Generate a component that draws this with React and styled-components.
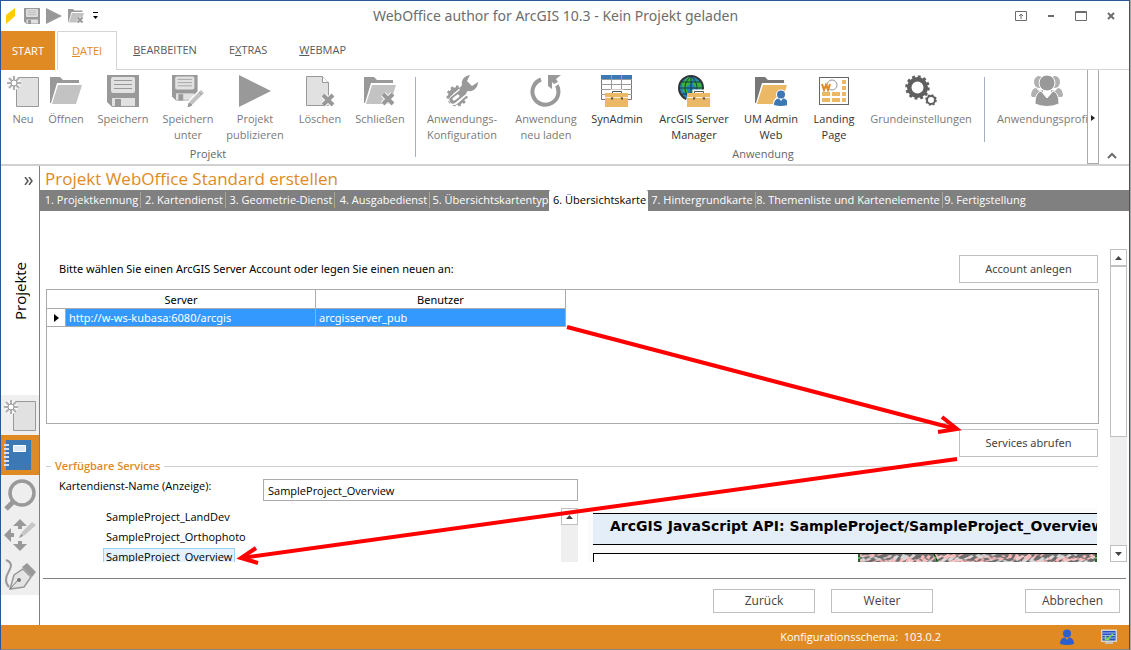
import React from 'react';
import styled, { createGlobalStyle } from 'styled-components';

const ORANGE = '#e08a23';
const GREY = '#999999';
const LIGHT = '#e1e1e1';
const BOX = '#ebb866';
const BLUE = '#3c78b4';

/* ---------- icons ---------- */

const Svg = ({ size = 32, children }) => (
  <svg width={size} height={size} viewBox="0 0 32 32" aria-hidden="true">{children}</svg>
);

const Gear = ({ cx, cy, r, hole, teeth, color }) => {
  const step = (Math.PI * 2 * r) / teeth / 2;
  return (
    <g fill="none" stroke={color}>
      <circle cx={cx} cy={cy} r={(r + hole) / 2} strokeWidth={r - hole} />
      <circle cx={cx} cy={cy} r={r} strokeWidth={r / 3} strokeDasharray={`${step} ${step}`} />
    </g>
  );
};

const Floppy = () => (
  <>
    <path d="M0 0H32V32H5L0 27Z" fill={GREY} />
    <rect x="4" y="2" width="24" height="16" rx="2" fill={LIGHT} />
    <path d="M7 5.5H25M7 9.5H25M7 13.5H25" stroke={GREY} />
    <path d="M5 23H28V31H5Z" fill={LIGHT} />
    <rect x="8" y="24" width="6" height="8" fill={GREY} />
  </>
);

const FolderShape = ({ back = GREY, front = '#c3c3c3' }) => (
  <>
    <path d="M0 2H10L13 5H29V8H7L1 28H0Z" fill={back} />
    <path d="M8 10H32L26 29H2Z" fill={front} />
  </>
);

const Cross = ({ x, y }) => (
  <g transform={`translate(${x} ${y})`}>
    <path d="M0 0L10 10M10 0L0 10" stroke="#fff" strokeWidth="6" />
    <path d="M0 0L10 10M10 0L0 10" stroke={GREY} strokeWidth="4" />
  </g>
);

const Pencil = () => (
  <>
    <path d="M16 32L18 26L29 15L32 18L21 29Z" fill="#fff" stroke="#fff" strokeWidth="3" />
    <path d="M16 32L18 26L29 15L32 18L21 29Z" fill="#c3c3c3" />
    <path d="M16 32L17 28L20 30ZM27 17L30 20" fill={GREY} stroke={GREY} />
  </>
);

const Toolbox = () => (
  <>
    <path d="M11 18V16H21V18" fill="none" stroke="#fff" strokeWidth="3" />
    <path d="M11.5 18V16.5H20.5V18" fill="none" stroke="#555" />
    <path d="M4 18H27V32H4Z" fill={BOX} />
    <path d="M4 22.5H10M13 22.5H19M22 22.5H27" stroke="#fff3dc" />
    <path d="M10 23.5H12M20 23.5H22" stroke="#555" strokeWidth="2" />
  </>
);

const NewIcon = () => (
  <Svg>
    <path d="M9 2.5H31.5V31.5H9.5V13" fill={LIGHT} stroke="#999" />
    <circle cx="7" cy="8" r="7" fill="#f6f6f6" />
    <path d="M7 1V15M0 8H14M2 3L12 13M12 3L2 13" stroke="#b0b0b0" strokeWidth="2" />
    <circle cx="7" cy="8" r="3" fill="#fff" stroke={GREY} />
  </Svg>
);

const OpenIcon = () => <Svg><FolderShape /></Svg>;
const SaveIcon = ({ size }) => <Svg size={size}><Floppy /></Svg>;
const SaveAsIcon = () => (
  <Svg>
    <g transform="scale(0.8)"><Floppy /></g>
    <Pencil />
  </Svg>
);
const PlayIcon = ({ size }) => <Svg size={size}><path d="M0 0L32 16L0 32Z" fill={GREY} /></Svg>;
const DeleteIcon = () => (
  <Svg>
    <path d="M2.5 1.5H18.5L24.5 7.5V30.5H2.5Z" fill={LIGHT} stroke={GREY} />
    <path d="M18.5 1.5V7.5H24.5" fill="#fff" stroke={GREY} />
    <Cross x={19} y={20} />
  </Svg>
);
const CloseProjectIcon = ({ size }) => (
  <Svg size={size}>
    <FolderShape />
    <Cross x={19} y={19} />
  </Svg>
);
const ConfigIcon = () => (
  <Svg>
    <Gear cx={11} cy={21} r={9} hole={4} teeth={11} color={GREY} />
    <path d="M8 25L17 17" stroke="#fff" strokeWidth="10" strokeLinecap="round" />
    <path d="M7 25L17 17" stroke={GREY} strokeWidth="7" strokeLinecap="round" />
    <path d="M8 24L12 21" stroke="#fff" strokeWidth="3" strokeLinecap="round" />
    <path d="M24 0C18 1 15 5 16 10L13 14L18 19L22 16C27 17 32 13 32 7L26 11L21 6Z" fill={GREY} />
  </Svg>
);
const ReloadIcon = () => (
  <Svg>
    <path d="M11 4.5A13 13 0 1 0 25.500 8.500" fill="none" stroke={GREY} strokeWidth="4" />
    <path d="M18 0H31L27 4L30 8L22 14L18 12Z" fill="#fff" />
    <path d="M18 0H31L26 4L28 7L24 9L22 7V14L18 11Z" fill={GREY} />
  </Svg>
);
const SynIcon = () => (
  <Svg>
    <path d="M0.5 0.5H30.5V24.5H0.5Z" fill="#fff" stroke="#777" />
    <path d="M0 4.5H31M0 9.500H31M0 14.500H31M0 19.500H31M10.5 0V24M20.5 0V24" stroke="#9a9a9a" />
    <path d="M0 0H10V4H0ZM11 0H20V4H11ZM21 0H31V4H21Z" fill={BLUE} />
    <Toolbox />
  </Svg>
);
const GlobeIcon = () => (
  <Svg>
    <circle cx="13" cy="13" r="12" fill="#2484bc" stroke="#333" strokeWidth="2" />
    <path d="M4 8L10 2L15 4L12 9L8 12L10 18L5 17ZM17 5L23 8L24 15L18 13L15 9ZM13 15L19 16L17 22L13 20Z" fill="#3cb43c" />
    <path d="M1 13H25M3 7H23M4 19H23M13 1C5 8 5 18 13 25M13 1C21 8 21 18 13 25M13 1V25" fill="none" stroke="#173c4c" />
    <path d="M8 32C6 19 14 16 28 16V32Z" fill="#fff" />
    <g transform="translate(5 0)"><Toolbox /></g>
  </Svg>
);
const UserShape = ({ color = BLUE }) => (
  <>
    <circle cx="16" cy="9" r="8" fill={color} />
    <path d="M2 30C2 19 9 17 12 17L16 22L20 17C24 17 30 20 30 30Q16 34 2 30Z" fill={color} />
  </>
);
const UmAdminIcon = () => (
  <Svg>
    <FolderShape back="#777777" front={BOX} />
    <g transform="translate(18 15) scale(0.5)">
      <circle cx="16" cy="9" r="10" fill="#fff" />
      <circle cx="16" cy="28" r="16" fill="#fff" />
      <UserShape />
    </g>
  </Svg>
);
const LandingIcon = () => (
  <Svg>
    <rect x="1.5" y="2.5" width="29" height="27" fill="#fff" stroke="#666" />
    <circle cx="14" cy="10" r="5" fill="none" stroke="#999" />
    <path d="M4 9L6 15L8 10L10 15L12 9" fill="none" stroke={ORANGE} strokeWidth="2" />
    <path d="M24 5H28V9H24ZM24 11H28V15H24ZM4 17H12V21H4ZM14 17H22V21H14ZM24 17H28V21H24ZM4 23H12V27H4ZM14 23H22V27H14ZM24 23H28V27H24Z" fill={BOX} />
  </Svg>
);
const SettingsIcon = () => (
  <Svg>
    <Gear cx={12.5} cy={12.5} r={10.5} hole={6} teeth={12} color="#606060" />
    <Gear cx={26} cy={25} r={5} hole={3} teeth={8} color="#606060" />
  </Svg>
);
const ProfilesIcon = () => (
  <Svg>
    <g fill="#b0b0b0">
      <ellipse cx="8" cy="7" rx="5" ry="6" />
      <ellipse cx="24" cy="7" rx="5" ry="6" />
      <path d="M0 20Q1 13 5 13L8 16L12 15V22H1ZM32 20Q31 13 27 13L24 16L20 15V22H31Z" />
    </g>
    <g fill={GREY} stroke="#fff">
      <ellipse cx="16" cy="8" rx="8" ry="8" />
      <path d="M4 29C4 20 7 17 10 16L16 23L22 16C25 17 28 20 28 29Q16 34 4 29Z" />
    </g>
  </Svg>
);

const LogoIcon = () => <Svg size={16}><path d="M8 14L26 0V16L8 32Z" fill="#ffcc00" /></Svg>;
const QuickCaret = () => (
  <svg width="12" height="16" viewBox="0 0 12 16" aria-hidden="true">
    <path d="M3 4.5H8" stroke="#000" /><path d="M3 8H8L5.5 11Z" />
  </svg>
);
const WinIcon = ({ d }) => (
  <svg width="12" height="12" viewBox="0 0 12 12" fill="none" stroke="#6c6c6c" aria-hidden="true">{d}</svg>
);

const BookIcon = () => (
  <Svg>
    <path d="M2 1H27V31H2Z" fill={BLUE} />
    <path d="M0 6H5M0 10H5M0 14H5M0 18H5M0 22H5M0 26H5" stroke="#d5e2ee" strokeWidth="2" />
    <path d="M9.500 6.500H21.500V12.500H9.500Z" fill="#dce9f5" stroke="#fff" />
  </Svg>
);
const SearchIcon = () => (
  <Svg>
    <circle cx="18" cy="14" r="12" fill="#eee" stroke={GREY} strokeWidth="3.500" />
    <path d="M9 23L2 30" stroke={GREY} strokeWidth="5" />
  </Svg>
);
const MoveIcon = () => (
  <Svg>
    <path d="M16 0L23 7H18V10H14V7H9ZM16 32L9 25H14V22H18V25H23ZM0 16L7 9V14H10V18H7V23Z" fill={GREY} />
    <path d="M15 19L18 13L28 3L32 6L21 16Z" fill="#c6c6c6" />
    <path d="M15 19L17 15L19 17Z" fill={GREY} />
  </Svg>
);
const PenIcon = () => (
  <Svg>
    <path d="M2 1Q10 4 5 12Q-1 22 5 28" fill="none" stroke={GREY} strokeWidth="2" />
    <path d="M6 30L10 16L19 10L27 18L20 28Z" fill="#e4e4e4" stroke={GREY} strokeWidth="1.500" />
    <path d="M6 30L14 21" stroke="#777" />
    <circle cx="15" cy="21" r="2" fill="#777" />
    <path d="M18 8L23 4L32 13L28 18Z" fill={GREY} />
  </Svg>
);
const MonitorIcon = () => (
  <Svg size={16}>
    <path d="M0 1H32V26H0Z" fill="#d8d4c8" />
    <path d="M3 4H29V23H3Z" fill="#2a4fc4" />
    <path d="M4 8H28M4 13H28M4 18H28" stroke="#a0b8f0" strokeWidth="2" />
    <path d="M24 10L13 20M9 14V21H17" fill="none" stroke="#7ee04a" strokeWidth="3" />
    <path d="M8 26H24V30H8Z" fill="#c4c0b4" />
  </Svg>
);
const Caret = ({ up }) => (
  <svg width="7" height="4" viewBox="0 0 7 4" aria-hidden="true">
    <path d={up ? 'M0 4L3.500 0L7 4Z' : 'M0 0H7L3.500 4Z'} fill="#444" />
  </svg>
);

/* ---------- frame ---------- */

const GlobalStyle = createGlobalStyle`
  * { box-sizing: border-box; }
  body { margin: 0; background: #a8a8a8; }
  button, input { font: inherit; color: inherit; margin: 0; }
  button { background: none; border: 0; padding: 0; white-space: nowrap; }
`;

const Window = styled.div`
  display: flex;
  flex-direction: column;
  height: 100vh;
  margin-right: 1px;
  border: 1px solid #2a579a;
  border-bottom-color: #8a8379;
  background: #fff;
  color: #000;
  font: 11px/16px "Noto Sans", "Open Sans", sans-serif;
  overflow: hidden;
`;

const TitleBar = styled.header`
  display: flex;
  align-items: center;
  flex: none;
  height: 30px;
  padding-right: 3px;
  color: #6d6d6d;
`;

const QuickBar = styled.div`
  display: flex;
  align-items: center;
  gap: 6px;
  width: 104px;
  padding-left: 1px;

  button { display: flex; }
`;

const Title = styled.h1`
  flex: 1;
  margin: 0;
  text-align: center;
  font: 14px/20px "Noto Sans", sans-serif;
`;

const WindowButton = styled.button`
  display: flex;
  align-items: center;
  justify-content: center;
  width: 30px;
  height: 28px;
`;

const Tabs = styled.nav`
  display: flex;
  flex: none;
  height: 39px;
  font-family: "Open Sans", sans-serif;
  font-size: 11px;

  &::after {
    content: "";
    flex: 1;
    border-bottom: 1px solid #d4d4d4;
  }
`;

const StartTab = styled.button`
  width: 54px;
  margin-right: 2px;
  background: ${ORANGE};
  color: #fff;
`;

const Tab = styled.button`
  padding: 0 ${(p) => (p.$active ? 14 : 16)}px;
  color: ${(p) => (p.$active ? ORANGE : '#5a5a5a')};
  border: solid #d4d4d4;
  border-width: ${(p) => (p.$active ? '1px 1px 0' : '0 0 1px')};
`;

const Ribbon = styled.section`
  display: flex;
  flex: none;
  height: 96px;
  border-bottom: 2px solid #d0d0d0;
  font-family: "Open Sans", sans-serif;
`;

const Strip = styled.div`
  display: flex;
  flex: 1;
  min-width: 0;
  overflow: hidden;
`;

const Group = styled.div`
  display: flex;
  flex-direction: column;
  flex: none;
  width: ${(p) => p.$width}px;
`;

const GroupItems = styled.div`
  display: flex;
  height: 76px;
`;

const GroupLabel = styled.div`
  text-align: center;
  color: #666;
`;

const Item = styled.button`
  display: flex;
  flex-direction: column;
  align-items: center;
  flex: none;
  gap: 4px;
  width: ${(p) => p.$width}px;
  padding-top: 5px;
  color: ${(p) => (p.$dark ? '#333' : '#7a7a7a')};
  line-height: 16px;
  white-space: pre;
`;

const Divider = styled.div`
  flex: none;
  width: 1px;
  height: ${(p) => p.$height}px;
  margin: 7px 0 0 ${(p) => p.$gap || 0}px;
  background: #a3b0c2;
`;

const RibbonScroll = styled.button`
  width: 12px;
  border: 1px solid #ababab;
  border-top: 0;
`;

const RibbonEnd = styled.div`
  display: flex;
  align-items: flex-end;
  width: 30px;
  padding: 0 8px;
`;

const Workspace = styled.div`
  display: flex;
  flex: 1;
  min-height: 0;
`;

/* ---------- sidebar ---------- */

const Sidebar = styled.aside`
  display: flex;
  flex-direction: column;
  width: 39px;
  padding-bottom: 30px;
  border-right: 1px solid #808080;
`;

const Expand = styled.button`
  height: 30px;
  padding-left: 18px;
`;

const SideTitle = styled.div`
  display: flex;
  flex: 1;
  align-items: center;
  justify-content: center;
  align-self: center;
  padding-top: 9px;
  writing-mode: vertical-rl;
  transform: rotate(180deg);
  font: 15px/20px "Open Sans", sans-serif;
`;

const SideButton = styled.button`
  display: flex;
  align-items: center;
  justify-content: center;
  height: 40px;
  background: ${(p) => (p.$active ? ORANGE : '#efefef')};
`;

/* ---------- wizard ---------- */

const Main = styled.main`
  display: flex;
  flex-direction: column;
  flex: 1;
  min-width: 0;
`;

const Heading = styled.h2`
  margin: 0;
  padding: 2px 5px 0;
  color: ${ORANGE};
  font: 17px/22px "Open Sans", sans-serif;
`;

const Steps = styled.ol`
  display: grid;
  grid-template-columns: 101px 84px 110px 95px 119px 99px 106px 186px 88px;
  flex: none;
  height: 21px;
  margin: 0;
  padding: 0;
  list-style: none;
  background: #808080;
  font-family: "Open Sans", sans-serif;
`;

const Step = styled.li`
  display: flex;
  align-items: center;
  justify-content: center;
  padding: 0 0 1px 2px;
  white-space: nowrap;
  color: ${(p) => (p.$active ? '#000' : '#fff')};
  background: ${(p) => (p.$active ? '#fff' : 'none')};
  border-radius: 2px 2px 0 0;

  &::after {
    content: "";
    width: 1px;
    height: 16px;
    margin: 0 -3px 0 2px;
    background: ${(p) => (p.$line ? '#aaa694' : 'none')};
  }
`;

const ScrollArea = styled.div`
  display: flex;
  flex: 1;
  gap: 11px;
  min-height: 0;
  padding: 0 2px 0 6px;
`;

const Form = styled.div`
  flex: 1;
  min-width: 0;
  padding-top: 44px;
  overflow: hidden;
`;

const ScrollTrack = styled.div`
  display: flex;
  flex-direction: column;
  flex: none;
  width: 17px;
  margin-top: ${(p) => p.$top || 0}px;
  background: #efefef;
`;

const ScrollButton = styled.button`
  display: flex;
  align-items: center;
  justify-content: center;
  flex: none;
  height: 17px;
  border: 1px solid #c0c0c0;
  background: #fff;
`;

const Thumb = styled.div`
  flex: 0 0 171px;
  margin-bottom: auto;
  border: 1px solid #c0c0c0;
  background: #fff;
`;

const Line = styled.div`
  display: flex;
  align-items: center;
  justify-content: space-between;
  padding: 0 1px 0 13px;
`;

const ActionButton = styled.button`
  width: 139px;
  height: 28px;
  margin-left: auto;
  border: 1px solid #c0c0c0;
  background: #fff;
  color: #444;
  font-family: "Noto Sans", sans-serif;
`;

const TableBox = styled.div`
  min-height: 135px;
  margin: 6px 0 5px;
  border: 1px solid #ababab;
`;

const Table = styled.table`
  width: 519px;
  border-collapse: separate;
  border-spacing: 0;
  table-layout: fixed;

  th, td {
    height: 18px;
    padding: 0 3px;
    border-right: 1px solid #ababab;
    border-bottom: 1px solid #ababab;
    font-weight: normal;
    text-align: left;
    line-height: 17px;
  }

  th {
    padding-top: 1px;
    text-align: center;
  }

  td:first-child { padding: 0 0 0 7px; }
  td:not(:first-child) { background: #3399ff; color: #fff; }
  td svg { display: block; }
`;

const Legend = styled.div`
  display: flex;
  align-items: center;
  gap: 4px;
  margin: 1px 1px 4px 0;
  color: ${ORANGE};
  font: 600 11px/16px "Open Sans", sans-serif;

  &::before, &::after {
    content: "";
    width: 5px;
    height: 1px;
    background: #d0d0d0;
  }

  &::after { flex: 1; }
`;

const NameRow = styled.div`
  display: grid;
  grid-template-columns: 204px 315px;
  align-items: start;
  margin-bottom: 7px;
  padding-left: 13px;
  font-family: "Open Sans", sans-serif;
`;

const TextInput = styled.input`
  height: 22px;
  margin-top: 1px;
  padding: 0 4px;
  border: 1px solid #ababab;
`;

const Split = styled.div`
  display: grid;
  grid-template-columns: 532px 1fr;
  gap: 10px;
  height: 60px;
`;

const ListPane = styled.div`
  display: flex;
`;

const ServiceList = styled.ul`
  flex: 1;
  margin: 0;
  padding: 0 0 0 57px;
  list-style: none;
  font-family: "Open Sans", sans-serif;
`;

const Service = styled.li`
  height: 20px;

  button {
    display: block;
    height: 18px;
    padding: 0 2px;
    line-height: 16px;
    border: 1px solid ${(p) => (p.$active ? '#9bd4f0' : 'transparent')};
    background: ${(p) => (p.$active ? '#e3f1fa' : 'none')};
  }
`;

const Preview = styled.div`
  min-width: 0;
  margin-right: 2px;
  padding: 5px 0 0 5px;
  background: #fbfbfb;
  overflow: hidden;
`;

const PreviewTitle = styled.div`
  height: 32px;
  padding: 0 17px;
  border: solid #000;
  border-width: 1px 0;
  background: #e4eef8;
  font: bold 14px/25px "DejaVu Sans", sans-serif;
  white-space: nowrap;
`;

const PreviewMap = styled.div`
  display: flex;
  justify-content: flex-end;
  height: 30px;
  margin-top: 8px;
  border: 1px solid #000;
  border-right: 0;
  background: #fff;
`;

const Footer = styled.footer`
  display: flex;
  justify-content: flex-end;
  flex: none;
  margin: 16px 3px 0;
  padding: 10px 6px 12px;
  border-top: 1px solid #808080;
`;

const FooterButton = styled.button`
  width: ${(p) => p.$width}px;
  height: 24px;
  margin-left: ${(p) => p.$gap}px;
  border: 1px solid #c0c0c0;
  color: #444;
  font-family: "Open Sans", sans-serif;
  font-size: 12px;
`;

const StatusBar = styled.div`
  display: flex;
  align-items: center;
  justify-content: flex-end;
  flex: none;
  height: 24px;
  padding-right: 12px;
  background: ${ORANGE};
  color: #fff;
  font-family: "Open Sans", sans-serif;
  white-space: pre;
`;

const StatusIcons = styled.div`
  display: flex;
  gap: 26px;
  margin-left: 118px;
`;

const Arrows = styled.svg`
  position: absolute;
  top: 0;
  left: 0;
  pointer-events: none;
`;

/* ---------- data ---------- */

const projectItems = [
  ['Neu', NewIcon, 44],
  ['Öffnen', OpenIcon, 42],
  ['Speichern', SaveIcon, 72],
  ['Speichern\nunter', SaveAsIcon, 58],
  ['Projekt\npublizieren', PlayIcon, 76],
  ['Löschen', DeleteIcon, 54],
  ['Schließen', CloseProjectIcon, 66],
];

const appItems = [
  ['Anwendungs-\nKonfiguration', ConfigIcon, 92],
  ['Anwendung\nneu laden', ReloadIcon, 76],
  ['SynAdmin', SynIcon, 66, true],
  ['ArcGIS Server\nManager', GlobeIcon, 88, true],
  ['UM Admin\nWeb', UmAdminIcon, 66, true],
  ['Landing\nPage', LandingIcon, 60, true],
  ['Grundeinstellungen', SettingsIcon, 114],
];

const steps = [
  { label: '1. Projektkennung', line: true },
  { label: '2. Kartendienst', line: true },
  { label: '3. Geometrie-Dienst', line: true },
  { label: '4. Ausgabedienst', line: true },
  { label: '5. Übersichtskartentyp' },
  { label: '6. Übersichtskarte', active: true },
  { label: '7. Hintergrundkarte', line: true },
  { label: '8. Themenliste und Kartenelemente', line: true },
  { label: '9. Fertigstellung' },
];

const services = ['SampleProject_LandDev', 'SampleProject_Orthophoto', 'SampleProject_Overview'];

const sideItems = [
  ['Neues Projekt', NewIcon],
  ['Projekt', BookIcon],
  ['Suche', SearchIcon],
  ['Bearbeiten', MoveIcon],
  ['Zeichnen', PenIcon],
];

const mapColors = ['#ffb9b9', '#e2dcdc', '#ff8484', '#fbc6c6', '#d9d9d9', '#6d6d6d', '#ffb9b9'];
const parcels = Array.from({ length: 260 }, (_, i) => ({
  x: (i * 89) % 237,
  y: (i * i * 3 + i) % 9,
  w: 2 + ((i * i) % 7),
  h: 1 + ((i * 5) % 4),
  color: mapColors[(i * i + i * 3) % mapColors.length],
}));

const MapDrawing = () => (
  <svg width="239" height="28" viewBox="0 0 239 28" aria-hidden="true">
    <rect width="239" height="28" fill="#6d6d6d" />
    {parcels.map((p, i) => (
      <path key={i} d={`M${p.x} ${p.y + p.h}l${p.w} -${p.h}l3 1l-${p.w} ${p.h}z`} fill={p.color} />
    ))}
    <path d="M1 0V28M76 0L80 9M238 0V28" stroke="#4fae57" strokeWidth="2" />
    <path d="M1 0V28M76 0L80 9M238 0V28" stroke="#111" strokeDasharray="3 2" />
  </svg>
);

const RibbonItem = ({ item: [label, Icon, width, dark] }) => (
  <Item $width={width} $dark={dark}>
    <Icon />
    <span>{label}</span>
  </Item>
);

export default function App() {
  return (
    <>
      <GlobalStyle />
      <Window>
        <TitleBar>
          <QuickBar>
            <LogoIcon />
            <button aria-label="Speichern"><SaveIcon size={16} /></button>
            <button aria-label="Publizieren"><PlayIcon size={16} /></button>
            <button aria-label="Schließen"><CloseProjectIcon size={16} /></button>
            <button aria-label="Anpassen"><QuickCaret /></button>
          </QuickBar>
          <Title>WebOffice author for ArcGIS 10.3 - Kein Projekt geladen</Title>
          <WindowButton aria-label="Menüband">
            <WinIcon d={<path d="M0.500 1.500H11.500V10.500H0.500ZM6 9V4M4 6L6 4L8 6" />} />
          </WindowButton>
          <WindowButton aria-label="Minimieren">
            <WinIcon d={<path d="M3 6H9" strokeWidth="2" />} />
          </WindowButton>
          <WindowButton aria-label="Maximieren">
            <WinIcon d={<path d="M0.500 1.500H11.500V10.500H0.500ZM0 2.500H12" />} />
          </WindowButton>
          <WindowButton aria-label="Fenster schließen">
            <WinIcon d={<path d="M3 3L9 9M9 3L3 9" strokeWidth="2" />} />
          </WindowButton>
        </TitleBar>

        <Tabs>
          <StartTab>START</StartTab>
          <Tab $active><u>D</u>ATEI</Tab>
          <Tab><u>B</u>EARBEITEN</Tab>
          <Tab>E<u>X</u>TRAS</Tab>
          <Tab><u>W</u>EBMAP</Tab>
        </Tabs>

        <Ribbon>
          <Strip>
            <Group $width={414}>
              <GroupItems>
                {projectItems.map((item) => <RibbonItem key={item[0]} item={item} />)}
              </GroupItems>
              <GroupLabel>Projekt</GroupLabel>
            </Group>
            <Divider $height={80} />
            <Group $width={694}>
              <GroupItems>
                {appItems.map((item) => <RibbonItem key={item[0]} item={item} />)}
                <Divider $height={65} $gap={6} />
                <RibbonItem item={['Anwendungsprofile', ProfilesIcon, 124]} />
              </GroupItems>
              <GroupLabel>Anwendung</GroupLabel>
            </Group>
          </Strip>
          <RibbonScroll aria-label="Weiter blättern">
            <svg width="4" height="6" viewBox="0 0 4 6"><path d="M0 0L4 3L0 6Z" fill="#222" /></svg>
          </RibbonScroll>
          <RibbonEnd>
            <button aria-label="Menüband reduzieren">
              <svg width="10" height="8" viewBox="0 0 10 8"><path d="M1 6L5 2L9 6" fill="none" stroke="#6c6c6c" strokeWidth="2" /></svg>
            </button>
          </RibbonEnd>
        </Ribbon>

        <Workspace>
          <Sidebar>
            <Expand aria-label="Ausklappen">
              <svg width="10" height="8" viewBox="0 0 10 8"><path d="M1 0L4 4L1 8M5 0L8 4L5 8" fill="none" stroke="#555" strokeWidth="1.500" /></svg>
            </Expand>
            <SideTitle>Projekte</SideTitle>
            {sideItems.map(([label, Icon], i) => (
              <SideButton key={label} aria-label={label} $active={i === 1}><Icon /></SideButton>
            ))}
          </Sidebar>

          <Main>
            <Heading>Projekt WebOffice Standard erstellen</Heading>
            <Steps>
              {steps.map((step) => (
                <Step key={step.label} $active={step.active} $line={step.line}>{step.label}</Step>
              ))}
            </Steps>

            <ScrollArea>
              <Form>
                <Line>
                  <span>Bitte wählen Sie einen ArcGIS Server Account oder legen Sie einen neuen an:</span>
                  <ActionButton>Account anlegen</ActionButton>
                </Line>
                <TableBox>
                  <Table>
                    <colgroup><col width="19" /><col width="250" /><col width="250" /></colgroup>
                    <thead>
                      <tr><th colSpan="2">Server</th><th>Benutzer</th></tr>
                    </thead>
                    <tbody>
                      <tr>
                        <td><svg width="5" height="8" viewBox="0 0 5 8"><path d="M0 0L5 4L0 8Z" /></svg></td>
                        <td>http://w-ws-kubasa:6080/arcgis</td>
                        <td>arcgisserver_pub</td>
                      </tr>
                    </tbody>
                  </Table>
                </TableBox>
                <Line>
                  <ActionButton>Services abrufen</ActionButton>
                </Line>
                <Legend>Verfügbare Services</Legend>
                <NameRow>
                  <label htmlFor="service-name">Kartendienst-Name (Anzeige):</label>
                  <TextInput id="service-name" defaultValue="SampleProject_Overview" />
                </NameRow>
                <Split>
                  <ListPane>
                    <ServiceList>
                      {services.map((name, i) => (
                        <Service key={name} $active={i === 2}><button>{name}</button></Service>
                      ))}
                    </ServiceList>
                    <ScrollTrack>
                      <ScrollButton aria-label="Nach oben"><Caret up /></ScrollButton>
                    </ScrollTrack>
                  </ListPane>
                  <Preview>
                    <PreviewTitle>ArcGIS JavaScript API: SampleProject/SampleProject_Overview</PreviewTitle>
                    <PreviewMap><MapDrawing /></PreviewMap>
                  </Preview>
                </Split>
              </Form>
              <ScrollTrack $top={38}>
                <ScrollButton aria-label="Nach oben"><Caret up /></ScrollButton>
                <Thumb />
                <ScrollButton aria-label="Nach unten"><Caret /></ScrollButton>
              </ScrollTrack>
            </ScrollArea>

            <Footer>
              <FooterButton $width={102}>Zurück</FooterButton>
              <FooterButton $width={102} $gap={16}>Weiter</FooterButton>
              <FooterButton $width={95} $gap={92}>Abbrechen</FooterButton>
            </Footer>
          </Main>
        </Workspace>

        <StatusBar>
          <span>Konfigurationsschema:  103.0.2</span>
          <StatusIcons>
            <Svg size={16}><UserShape color="#2a5fd0" /></Svg>
            <MonitorIcon />
          </StatusIcons>
        </StatusBar>
      </Window>

      <Arrows width="1131" height="650" viewBox="0 0 1131 650" fill="none" stroke="#ff0000" strokeWidth="4">
        <path d="M567 327L956 429" />
        <path d="M942 417L957 429L938 432" />
        <path d="M957 459L241 558" />
        <path d="M256 548L241 558L258 563" />
      </Arrows>
    </>
  );
}
